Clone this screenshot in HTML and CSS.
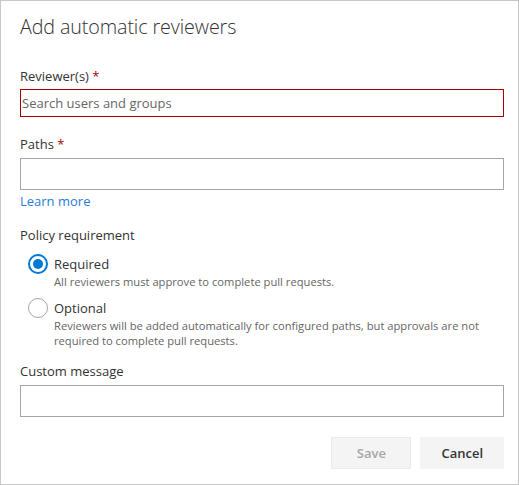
FILE: index.html
```html
<!DOCTYPE html>
<html>
<head>
<meta charset="utf-8">
<link rel="stylesheet" href="styles.css">
</head>
<body>
<div class="dialog">
  <h1 class="title">Add automatic reviewers</h1>
  <div class="label first">Reviewer(s) <span class="req">*</span></div>
  <div class="input error"><span class="placeholder">Search users and groups</span></div>
  <div class="label">Paths <span class="req">*</span></div>
  <div class="input tall"></div>
  <a class="link">Learn more</a>
  <div class="label policy">Policy requirement</div>
  <div class="options">
    <div class="option">
      <span class="radio checked"></span>
      <div class="option-text">
        <div class="option-title">Required</div>
        <div class="option-desc">All reviewers must approve to complete pull requests.</div>
      </div>
    </div>
    <div class="option second">
      <span class="radio"></span>
      <div class="option-text">
        <div class="option-title">Optional</div>
        <div class="option-desc">Reviewers will be added automatically for configured paths, but approvals are not<br>required to complete pull requests.</div>
      </div>
    </div>
  </div>
  <div class="label custom">Custom message</div>
  <div class="input tall"></div>
  <div class="actions">
    <button class="btn disabled">Save</button>
    <button class="btn">Cancel</button>
  </div>
</div>
</body>
</html>
```
FILE: styles.css
```css
html, body {
  margin: 0;
  padding: 0;
  background: #fff;
}
.dialog {
  box-sizing: border-box;
  width: 519px;
  height: 485px;
  border: 1px solid #c8c8c8;
  padding: 0 14px 0 19px;
  font-family: "Segoe UI", "Open Sans", "Noto Sans", sans-serif;
  color: #333;
}
.title {
  margin: 12px 0 0 0;
  font-size: 19.7px;
  line-height: 28px;
  font-weight: 300;
  color: #333;
  letter-spacing: -0.1px;
}
.label {
  font-size: 13px;
  line-height: 20px;
  margin-top: 17px;
  color: #333;
}
.label.first {
  margin-top: 25px;
}
.label.policy {
  margin-top: 14px;
}
.label.custom {
  margin-top: 13px;
}
.req {
  color: #a80000;
}
.input {
  box-sizing: border-box;
  height: 32px;
  border: 1px solid #a6a6a6;
  margin-top: 4px;
  display: flex;
  align-items: center;
}
.input.error {
  height: 28px;
  margin-top: 3px;
  border-color: #a80000;
}
.placeholder {
  font-size: 13px;
  color: #666;
  padding-left: 1px;
}
.link {
  display: block;
  margin-top: 1px;
  font-size: 13px;
  line-height: 20px;
  color: #2b7bd6;
}
.options {
  padding-left: 8px;
  margin-top: 9px;
}
.option {
  display: flex;
  gap: 6px;
}
.option.second {
  margin-top: 9px;
}
.radio {
  box-sizing: border-box;
  width: 20px;
  height: 20px;
  border-radius: 50%;
  border: 1px solid #a6a6a6;
  flex: none;
  position: relative;
}
.radio.checked {
  border: 2px solid #0078d4;
}
.radio.checked::after {
  content: "";
  position: absolute;
  left: 3px;
  top: 3px;
  width: 10px;
  height: 10px;
  border-radius: 50%;
  background: #0078d4;
}
.option-title {
  font-size: 13px;
  line-height: 20px;
  color: #333;
}
.option-desc {
  font-size: 11.2px;
  line-height: 15px;
  color: #666;
}
.actions {
  display: flex;
  justify-content: flex-end;
  gap: 9px;
  margin-top: 20px;
}
.btn {
  box-sizing: border-box;
  height: 32px;
  min-width: 80px;
  padding: 0 20px;
  border: 1px solid #f4f4f4;
  background: #f4f4f4;
  font-family: inherit;
  font-size: 13px;
  font-weight: 600;
  color: #333;
}
.btn.disabled {
  color: #a6a6a6;
  border-color: #eaeaea;
}
```
